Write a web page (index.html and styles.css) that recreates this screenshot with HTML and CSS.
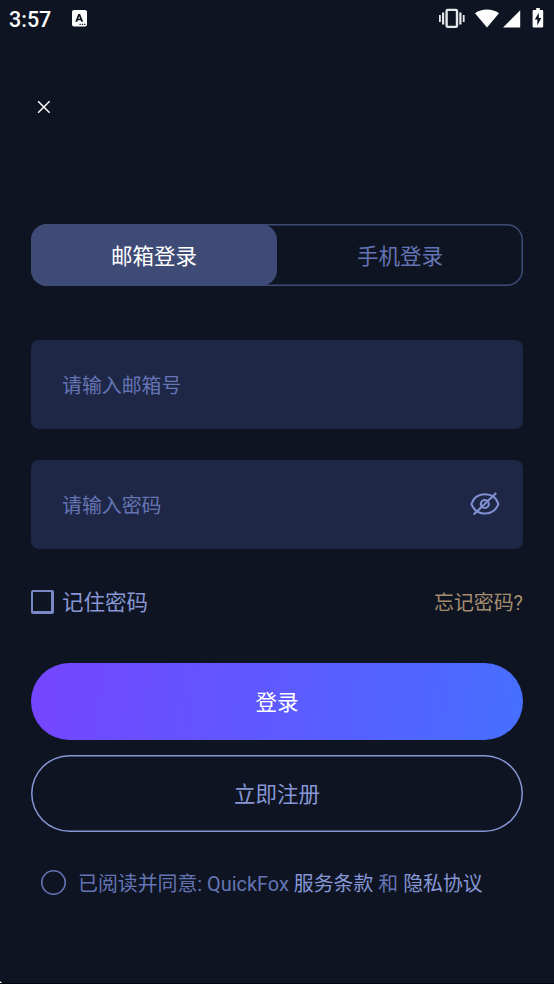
FILE: index.html
```html
<!DOCTYPE html>
<html lang="zh-CN">
<head>
<meta charset="utf-8">
<title>登录</title>
<link rel="stylesheet" href="styles.css">
</head>
<body>
<div class="screen">
  <header class="status">
    <span class="time">3:57</span>
    <svg class="ime" width="15" height="17" viewBox="0 0 15 17"><rect width="15" height="16.5" rx="2" fill="#fff"/><path d="M3.200 11.700 6.300 4h1.800l3.100 7.700H9.100l-.5-1.400H5.800l-.5 1.400zM6.300 8.800h1.800L7.200 6.200z" fill="#0e1422" fill-rule="evenodd"/><path d="M7.500 14.300h1.300m1 0h1.300m1 0h1.300" stroke="#0e1422" stroke-width="1.300"/></svg>
    <svg class="tray" width="106" height="22" viewBox="0 0 106 22" fill="#fff"><path d="M0 8h1.800v7H0zM3 5.500h2.200v12H3zM20.300 5.500h2.200v12h-2.200zM23.800 8h1.800v7h-1.800z" opacity=".9"/><rect x="7.600" y="2.900" width="10.400" height="17" rx="1.200" fill="none" stroke="#e4e6ea" stroke-width="2.400"/><path d="M36 6.300c6.800-5 17.200-5 24 0L48 20.500zM81.200 3.200v17.300H64zM97.200 1h3.600v2h2.200q1.200 0 1.200 1.200v15q0 1.300-1.200 1.300h-8.200q-1.200 0-1.200-1.300v-15q0-1.200 1.200-1.200h2.400z"/><path d="M99.800 5.800 95.800 12.500h2.500v6l4-7.500H99.800z" fill="#0e1422"/></svg>
  </header>
  <button class="close" aria-label="关闭"><svg width="14" height="14" viewBox="0 0 14 14"><path d="m1.100 1.300 11.500 11.500m0-11.500L1.100 12.800" stroke="#fff" stroke-width="1.500"/></svg></button>
  <main>
    <nav class="tabs"><div class="tab active">邮箱登录</div><div class="tab">手机登录</div></nav>
    <div class="field">请输入邮箱号</div>
    <div class="field">请输入密码
      <svg class="eye" width="30" height="24" viewBox="0 0 30 24" fill="none" stroke="#8291d2" stroke-width="2.100"><path d="M1.400 12C3.500 6 8.500 2.300 15 2.300S26.500 6 28.400 12C26.500 17.500 21.500 21.500 15 21.500S3.500 17.500 1.400 12z"/><circle cx="14.800" cy="12" r="4"/><path d="M3.700 22.500 26.200 1"/></svg>
    </div>
    <div class="options"><span class="check"></span><span class="remember">记住密码</span><a class="forgot">忘记密码?</a></div>
    <button class="btn login">登录</button>
    <button class="btn register">立即注册</button>
    <div class="terms"><span class="radio"></span><span>已阅读并同意: QuickFox <a>服务条款</a> 和 <a>隐私协议</a></span></div>
  </main>
  <span class="corner"></span>
</div>
</body>
</html>
```
FILE: styles.css
```css
* { box-sizing: border-box; }
body {
  margin: 0;
  background: #0e1422;
  font-family: Roboto, "Noto Sans CJK SC", sans-serif;
}
.screen {
  position: relative;
  height: 984px;
  overflow: hidden;
  border-bottom: 1px solid #04060c;
}
button {
  display: block;
  border: 0;
  padding: 0;
  background: none;
  font-family: inherit;
}
svg { display: block; flex: none; }
.status {
  display: flex;
  align-items: center;
  height: 38px;
  padding: 0 9px;
  color: #fff;
}
.time {
  width: 63px;
  font-size: 21.5px;
  font-weight: 500;
}
.ime { margin-top: -1px; }
.tray { margin-left: auto; margin-top: -2px; }
.close { margin: 61.5px 0 0 36.5px; }
main { padding: 110.5px 31px 0; }
.tabs {
  display: flex;
  height: 62px;
  margin-bottom: 54px;
  border-radius: 16px;
  box-shadow: inset 0 0 0 1.5px #3f4b77;
}
.tab {
  flex: 1;
  display: flex;
  align-items: center;
  justify-content: center;
  padding-bottom: 2px;
  border-radius: 16px;
  color: #6574b5;
  font-size: 21.5px;
}
.tab.active { background: #3f4b77; color: #fff; }
.field {
  display: flex;
  align-items: center;
  justify-content: space-between;
  height: 89px;
  margin-bottom: 31px;
  padding: 0 23px 0 31px;
  border-radius: 8px;
  background: #1e2745;
  color: #6574b5;
  font-size: 19.9px;
}
.eye { margin-top: -2px; }
.options {
  display: flex;
  align-items: center;
  height: 44px;
  color: #8797d5;
  font-size: 21.5px;
}
.check {
  width: 23px;
  height: 24px;
  margin-right: 8px;
  border: 2px solid #7988c4;
  border-width: 2px 3px 3px 2px;
  border-radius: 2px;
}
.remember { padding-bottom: 3px; }
.forgot {
  margin-left: auto;
  padding-bottom: 2px;
  color: #a58d70;
  font-size: 19.9px;
}
.btn {
  width: 100%;
  height: 77px;
  padding-bottom: 2px;
  border-radius: 39px;
  font-size: 21.5px;
}
.login {
  margin: 38.5px 0 15.5px;
  background: linear-gradient(98deg, #7545ff, #466fff);
  color: #fff;
}
.register {
  box-shadow: inset 0 0 0 1.5px #8797d5;
  color: #8797d5;
}
.terms {
  display: flex;
  align-items: center;
  height: 38px;
  margin-top: 31px;
  padding-left: 10px;
  color: #6574b5;
  font-size: 19.9px;
  white-space: nowrap;
}
.radio {
  width: 25px;
  height: 25px;
  margin-right: 12px;
  box-shadow: inset 0 0 0 1.6px #6574b5;
  border-radius: 50%;
}
.terms a { color: #8797d5; }
.corner {
  position: absolute;
  left: 0;
  bottom: -1px;
  width: 3px;
  height: 3px;
  background: #fff;
  clip-path: polygon(0 0, 100% 100%, 0 100%);
}
```
